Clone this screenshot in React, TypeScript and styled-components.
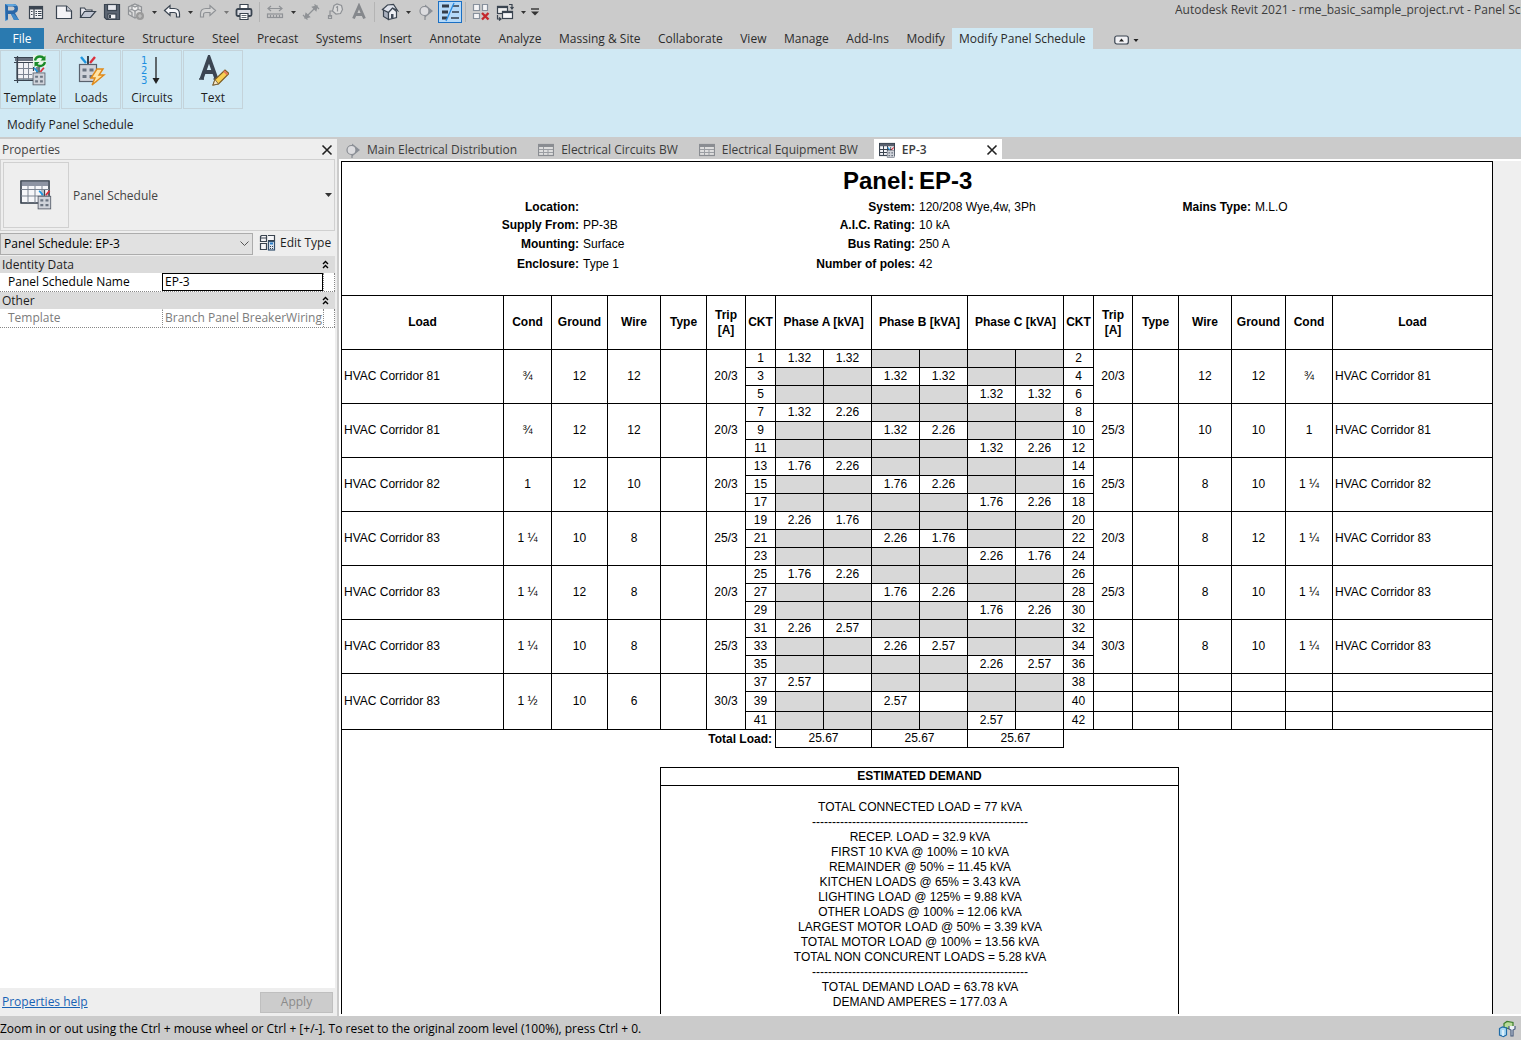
import React from "react";
import styled, { createGlobalStyle } from "styled-components";

const chrome = "#cbcbcb";
const ribbon = "#d0e9f4";
const ink = "#3a4450";
const faded = "#8f9296";

const GlobalStyle = createGlobalStyle`
  *, *::before, *::after { box-sizing: border-box; }
  body { margin: 0; font: 12px/16px "Open Sans", "Noto Sans", sans-serif; color: #1e1e1e; }
  button, input, select { font: inherit; color: inherit; margin: 0; }
`;

const Shell = styled.div`
  display: flex;
  flex-direction: column;
  height: 100vh;
  overflow: hidden;
  background: ${chrome};
`;

/* ---------- title bar ---------- */
const TitleBar = styled.header`
  display: flex;
  height: 28px;
  flex: none;
`;
const QuickAccess = styled.div`
  display: flex;
  align-items: center;
  height: 24px;
`;
const ToolButton = styled.button<{ $active?: boolean; $start?: boolean }>`
  display: flex;
  align-items: center;
  justify-content: center;
  width: 24px;
  height: 22px;
  padding: 0;
  margin-left: ${(p) => (p.$start ? 4 : 0)}px;
  border: 1px solid ${(p) => (p.$active ? "#1a6fc4" : "transparent")};
  background: ${(p) => (p.$active ? "#b5d9f8" : "none")};
`;
const ArrowButton = styled.button`
  display: flex;
  align-items: center;
  justify-content: center;
  width: 12px;
  height: 22px;
  padding: 0;
  border: 0;
  background: none;
`;
const Divider = styled.span`
  width: 1px;
  height: 20px;
  margin: 0 3px;
  background: #b4b4b4;
`;
const WindowTitle = styled.div`
  width: 346px;
  margin-left: auto;
  padding-top: 2px;
  overflow: hidden;
  white-space: nowrap;
  color: #3c3c3c;
`;

/* ---------- ribbon ---------- */
const RibbonTabs = styled.nav`
  display: flex;
  align-items: stretch;
  height: 21px;
  flex: none;
`;
const TabGroup = styled.div`
  display: flex;
  justify-content: space-between;
  width: 903px;
  margin-left: 5px;
`;
const RibbonTab = styled.button<{ $kind?: "file" | "active" }>`
  padding: 1px 7px 0;
  border: 0;
  white-space: nowrap;
  line-height: 20px;
  color: ${(p) => (p.$kind === "file" ? "#fff" : "#2b2b2b")};
  background: ${(p) => (p.$kind === "file" ? "#2a7ab0" : p.$kind === "active" ? ribbon : "none")};
  ${(p) => (p.$kind === "file" ? "width: 44px;" : "")}
`;
const Minimize = styled.button`
  display: flex;
  align-items: center;
  margin-left: 21px;
  padding: 2px 0 0;
  border: 0;
  background: none;
`;
const Ribbon = styled.section`
  display: flex;
  gap: 1px;
  height: 62px;
  padding-top: 1px;
  flex: none;
  background: ${ribbon};
`;
const RibbonButton = styled.button`
  display: flex;
  flex-direction: column;
  align-items: center;
  gap: 3px;
  width: 60px;
  height: 59px;
  padding: 4px 0 0;
  border: 1px solid #c4d3da;
  background: none;
`;
const PanelTitle = styled.div`
  height: 28px;
  padding: 6px 7px 0;
  flex: none;
  border-bottom: 2px solid ${chrome};
  background: ${ribbon};
`;

/* ---------- workspace ---------- */
const Workspace = styled.main`
  display: flex;
  flex: 1;
  min-height: 0;
`;
const Properties = styled.aside`
  display: flex;
  flex-direction: column;
  width: 337px;
  flex: none;
  padding-right: 2px;
  background: #eeeeee;
`;
const PropertiesHead = styled.div`
  display: flex;
  align-items: center;
  justify-content: space-between;
  height: 20px;
  padding: 2px 2px 0;
  color: #444;
`;
const IconButton = styled.button`
  display: flex;
  padding: 0;
  border: 0;
  background: none;
`;
const TypeSelector = styled.button`
  display: flex;
  align-items: center;
  gap: 4px;
  height: 72px;
  padding: 0 2px;
  border: 1px solid #d0d0d0;
  background: none;
  color: #444;
  text-align: left;
`;
const TypeThumb = styled.span`
  display: flex;
  align-items: center;
  justify-content: center;
  width: 66px;
  height: 66px;
  border: 1px solid #d0d0d0;
`;
const TypeName = styled.span`
  flex: 1;
  padding-top: 2px;
`;
const FilterRow = styled.div`
  display: flex;
  align-items: center;
  gap: 6px;
  height: 25px;
`;
const FilterBox = styled.div`
  position: relative;
  width: 253px;
  height: 22px;
  svg { position: absolute; right: 4px; top: 8px; pointer-events: none; }
`;
const Filter = styled.select`
  width: 100%;
  height: 100%;
  padding: 0 3px;
  appearance: none;
  border: 1px solid #acacac;
  border-radius: 0;
  background: #e1e1e1;
  color: #000;
`;
const EditType = styled.button`
  display: flex;
  align-items: center;
  gap: 4px;
  padding: 0 0 2px;
  border: 0;
  background: none;
  white-space: nowrap;
`;
const PropertyList = styled.div`
  flex: 1;
  background: #fff;
`;
const GroupHead = styled.button`
  display: flex;
  align-items: center;
  justify-content: space-between;
  width: 100%;
  height: 17px;
  padding: 0 6px 0 2px;
  border: 0;
  background: #dbdbdb;
`;
const PropertyRow = styled.div<{ $muted?: boolean }>`
  display: grid;
  grid-template-columns: 162px 161px 12px;
  height: 19px;
  border-bottom: 1px dotted #888;
  color: ${(p) => (p.$muted ? "#7c7c7c" : "#000")};
`;
const PropertyName = styled.label`
  padding-left: 8px;
  line-height: 17px;
`;
const PropertyInput = styled.input`
  width: 100%;
  min-width: 0;
  height: 18px;
  padding: 0 0 1px 2px;
  border: 1px solid #000;
  border-radius: 0;
  outline: 0;
  background: #fff;
  &:disabled { border-color: transparent; border-right: 0; border-left: 1px dotted #888; color: #7c7c7c; }
`;
const PropertyEnd = styled.span`
  border: 1px dotted #888;
  border-width: 0 1px;
`;
const PropertiesFoot = styled.div`
  display: flex;
  align-items: center;
  justify-content: space-between;
  height: 28px;
  padding: 0 2px;
`;
const HelpLink = styled.a`
  color: #1762b5;
`;
const ApplyButton = styled.button`
  width: 73px;
  height: 21px;
  padding: 0;
  border: 1px solid #bfbfbf;
  background: #cccccc;
  &:disabled { color: #8a8a8a; }
`;

/* ---------- document view ---------- */
const DocumentView = styled.section`
  display: flex;
  flex-direction: column;
  flex: 1;
  min-width: 0;
  margin-left: 2px;
`;
const ViewTabs = styled.div`
  display: flex;
  height: 20px;
  flex: none;
`;
const ViewTab = styled.div<{ $active?: boolean }>`
  display: flex;
  align-items: center;
  padding: 1px ${(p) => (p.$active ? 4 : 16)}px 0 0;
  background: ${(p) => (p.$active ? "#fff" : "none")};
  ${(p) => (p.$active ? "width: 128px; font-weight: 600;" : "")}
`;
const ViewTabButton = styled.button`
  display: flex;
  flex: 1;
  align-items: center;
  gap: 7px;
  padding: 0 0 0 5px;
  border: 0;
  background: none;
  white-space: nowrap;
  color: #3c3c3c;
`;
const Canvas = styled.div`
  display: flex;
  flex: 1;
  min-height: 0;
  padding: 2px 0 2px 2px;
  background: #fff;
`;
const Margin = styled.div`
  width: 28px;
  background: #efefef;
`;
const Sheet = styled.article`
  display: flex;
  flex-direction: column;
  flex: 1;
  min-width: 0;
  overflow: hidden;
  border: 1px solid #000;
  border-bottom: 0;
  font: 12px/15px "Liberation Sans", Arial, sans-serif;
  color: #000;
`;
const SheetHead = styled.div`
  display: grid;
  grid-template-columns: 237px 1fr 100px 228px 100px 237px;
  grid-template-rows: 36px 18px 18px 20px 20px;
  column-gap: 4px;
  align-items: center;
  height: 133px;
  flex: none;
`;
const SheetTitle = styled.h1`
  grid-column: 3 / 5;
  margin: 0;
  padding-top: 2px;
  display: grid;
  grid-template-columns: 100px 1fr;
  column-gap: 4px;
  font-size: 24px;
  line-height: 28px;
  span:first-child { justify-self: end; }
`;
const Fact = styled.span<{ $col: number; $row: number; $label?: boolean }>`
  grid-column: ${(p) => p.$col};
  grid-row: ${(p) => p.$row};
  white-space: nowrap;
  ${(p) => (p.$label ? "font-weight: bold; justify-self: end;" : "")}
`;
const Schedule = styled.table`
  width: 100%;
  flex: none;
  table-layout: fixed;
  border-collapse: separate;
  border-spacing: 0;
  border-top: 1px solid #000;
`;
const Column = styled.col<{ $w?: number }>`
  width: ${(p) => (p.$w ? `${p.$w}px` : "auto")};
`;
const HeadCell = styled.th`
  height: 54px;
  padding: 0;
  border: 1px solid #000;
  border-width: 0 1px 1px 0;
  &:last-child { border-right: 0; }
`;
const Row = styled.tr<{ $tall?: boolean }>`
  height: ${(p) => (p.$tall ? 20 : 18)}px;
`;
const Cell = styled.td<{ $load?: boolean; $shaded?: boolean; $last?: boolean }>`
  padding: ${(p) => (p.$load ? "0 2px" : "0")};
  border: 1px solid #000;
  border-width: 0 ${(p) => (p.$last ? 0 : 1)}px 1px 0;
  text-align: ${(p) => (p.$load ? "left" : "center")};
  background: ${(p) => (p.$shaded ? "#d8d8d8" : "none")};
`;
const TotalLabel = styled.th`
  padding: 0 3px;
  border-right: 1px solid #000;
  text-align: right;
`;
const Demand = styled.section`
  flex: 1;
  width: 519px;
  margin: 19px auto 0 318px;
  border: 1px solid #000;
  border-bottom: 0;
`;
const DemandTitle = styled.h2`
  margin: 0;
  height: 18px;
  border-bottom: 1px solid #000;
  font-size: 12px;
  line-height: 17px;
  text-align: center;
`;
const DemandText = styled.div`
  padding: 14px 0 0 1px;
  text-align: center;
  white-space: pre-line;
`;
const StatusBar = styled.footer`
  display: flex;
  align-items: center;
  justify-content: space-between;
  height: 24px;
  padding: 2px 5px 0 0;
  flex: none;
  color: #000;
`;

/* ---------- icons ---------- */
type Kids = { children: React.ReactNode; s?: number };
const Svg = ({ children, s = 18 }: Kids) => (
  <svg width={s} height={s} viewBox={`0 0 ${s} ${s}`} fill="none" stroke={ink} strokeWidth="1.2" aria-hidden="true">
    {children}
  </svg>
);
const Caret = ({ c = "#333" }: { c?: string }) => (
  <svg width="5" height="3" viewBox="0 0 5 3" aria-hidden="true"><path d="M0 0h5L2.500 3z" fill={c} /></svg>
);
const Cross = () => (
  <svg width="12" height="12" viewBox="0 0 12 12" aria-hidden="true"><path d="M1.500 1.500l9 9M10.500 1.500l-9 9" stroke="#222" strokeWidth="1.600" /></svg>
);
const RevitLogo = () => (
  <Svg s={20}>
    <g stroke="none">
      <path d="M3 2l3 1v15l-3 1z" fill="#4f97d6" />
      <path d="M3 2h8q5 0 5 4.500 0 3.500-3 4.500l4 7h-5l-3-6H6v5l-2 1z" fill="#2a67a8" />
      <path d="M6 4.500h4.500q2 0 2 2t-2 2H6z" fill={chrome} />
      <path d="M3 2h8q3 0 4.300 2H6z" fill="#5fa5de" />
      <path d="M9 12h3l5 6h-5z" fill="#3f88c8" />
    </g>
  </Svg>
);
const PropsIcon = () => (
  <Svg><rect x="2.500" y="3.500" width="13" height="12" fill="#f4f4f6" /><path d="M2 5h14" strokeWidth="3" /><path d="M7 6v9" /><path d="M4 8.500h1.500M4 11.500h1.500M8.500 8.500h1.500M8.500 10.500h1.500M8.500 12.500h1.500M11 8.500h3.500M11 10.500h3.500M11 12.500h3.500" /></Svg>
);
const NewIcon = () => (
  <Svg><path d="M1.500 3h10l5 5v7.500h-15z" fill="#f3f3f6" /><path d="M11.500 3v5h5" fill="#c9ccd6" /></Svg>
);
const OpenIcon = () => (
  <Svg><path d="M1.500 14V5h4l1.500 2h6v2" fill="#e8e8ee" /><path d="M1.500 14.500l4-6h11l-5 6z" fill="#c3c8d4" /></Svg>
);
const SaveIcon = () => (
  <Svg><path d="M1.500 1.500h15v15h-13l-2-2z" fill="#5d6673" /><rect x="4.500" y="1.500" width="9" height="6" fill="#e6e8ee" /><rect x="5" y="11" width="8" height="5" fill="#f3f3f5" /><path d="M7 12v3" strokeWidth="2" /></Svg>
);
const CubesIcon = () => (
  <Svg><g stroke={faded}><path d="M8 1l6.500 3v7.500L8 15l-6.500-3.500V4z" fill="#dcdcdc" /><path d="M5 2.500v4l3 1.500 3-1.500v-4L8 4z" fill="#efefef" /><path d="M1.500 7.500L5 6.500M14.500 7.500L11 6.500M8 8v6.500M1.500 7.500L5 9.500v4" /></g><circle cx="13" cy="13" r="4" fill="#9a9a9a" stroke="none" /><path d="M11 13h4M13 11v4" stroke="#c4c4c4" /></Svg>
);
const UndoIcon = ({ off }: { off?: boolean }) => (
  <Svg><path transform={off ? "translate(18 0) scale(-1 1)" : undefined} stroke={off ? faded : ink} fill={off ? "#d4d4d4" : "#f4f5f8"} d="M1.500 7.500l5.500-5v3h4q5.500 0 5.500 5.500v3h-3v-2.500q0-2-2.500-2H7v3z" /></Svg>
);
const PrintIcon = () => (
  <Svg><path d="M5 6V1.500h8V6" fill="#fff" /><rect x="1.500" y="6" width="15" height="7" rx="1.500" fill="#d9dbe2" strokeWidth="1.800" /><path d="M5 10.500h8v6H5z" fill="#fff" /><path d="M6.500 12.500h5M6.500 14.500h5" strokeWidth=".8" /></Svg>
);
const MeasureIcon = () => (
  <Svg><g stroke={faded}><path d="M2.500 5.500h13M5 3L2 5.500 5 8M13 3l3 2.500L13 8" /><rect x="1.500" y="11" width="15" height="3.500" /><path d="M4.500 12v2M7.500 12v2M10.500 12v2M13.500 12v2" /></g></Svg>
);
const AlignedIcon = () => (
  <Svg><g stroke={faded}><path d="M3 15L15 3" /><path d="M4 10.500L3 15l4.500-1zM14 7.500L15 3l-4.500 1z" fill={faded} /><path d="M1 12l4.500 4.500M12.500 1.500L17 6" /></g></Svg>
);
const TagIcon = () => (
  <Svg><g stroke={faded}><path d="M8 2.500l3-1.500 4.500 1.500 1 4-2 4-4.500.5L6.500 8z" fill="#dadada" /><path d="M6.500 8H4v6M2.500 12.500h3v3h-3z" /><path d="M10 4.500l1.500-1v5" /></g></Svg>
);
const LetterIcon = () => (
  <Svg><path d="M3.500 15.500L9 3l5.500 12.500M5.500 11.500h7" stroke="#85888c" strokeWidth="2.800" /></Svg>
);
const HouseIcon = () => (
  <Svg><path d="M2.500 6.500l5 2.500v7.500l-5-3z" fill="#a9b0be" /><path d="M7.500 9l4-4 4 3.500v6l-8 2z" fill="#eef0f5" /><path d="M1.500 6.500L6.500 2l6-.5 4 6-5-2.500-4 4.500z" fill="#dfe3ec" /><path d="M10 11h2.500v4.500H10z" fill="#444e5c" stroke="none" /></Svg>
);
const SectionIcon = ({ s = 18 }: { s?: number }) => (
  <Svg s={s}><path d="M8 1.500L16 8l-8 6.500z" fill="#8b9098" stroke="none" /><circle cx="7.500" cy="8" r="4.500" fill="#dcdcdf" stroke="#878b91" /><path d="M8 13v4" stroke="#878b91" /></Svg>
);
const ThinLinesIcon = () => (
  <Svg s={20}><path d="M2 4h7M2 10h6M2 16h5" stroke="#333d49" strokeWidth="3" /><path d="M13 4h6M12 10h7M11 16h8" stroke="#333d49" strokeWidth="1.500" /><path d="M14 1L6 19" stroke="#2a8be0" strokeWidth="1.300" /></Svg>
);
const CloseViewsIcon = () => (
  <Svg><path d="M1.500 1.500h6v6h-6zM10.500 1.500h5v6h-5zM1.500 10.500h6v5h-6z" fill="#f4f4f6" stroke="#87909c" /><path d="M10 10l6.500 6.500M16.500 10L10 16.500" stroke="#c4282d" strokeWidth="2.400" /></Svg>
);
const SwitchIcon = () => (
  <Svg><rect x="1.500" y="3.500" width="10" height="7" fill="#eee" /><path d="M1 4h11" strokeWidth="2.200" /><rect x="6.500" y="8.500" width="10" height="7" fill="#f6f6f8" /><path d="M6 9h11" strokeWidth="2.200" /><path d="M13 1.500h3v4M14.500 4l1.500 2 1.500-2M1.500 12v4h3M3 14.500l2 1.500-2 1.500" /></Svg>
);
const CustomizeIcon = () => (
  <svg width="8" height="8" viewBox="0 0 8 8" aria-hidden="true"><path d="M0 1h8" stroke="#333" strokeWidth="1.400" /><path d="M0 3.500h8L4 7.500z" fill="#333" /></svg>
);
const Breaker = () => (
  <g>
    <path d="M3 1l5 6" stroke="#1d95e0" strokeWidth="2.400" /><path d="M17 1l-5 6" stroke="#dc2f3c" strokeWidth="2.400" /><path d="M10 0v8" strokeWidth="2" />
    <rect x="1.500" y="8.500" width="17" height="17" fill="#d0d3da" stroke="#59616d" />
    <path d="M4.500 12.500h4v3h-4zM11.500 12.500h4v3h-4zM4.500 19h4v3h-4zM11.500 19h4v3h-4z" fill="#6b7481" stroke="none" />
  </g>
);
const GridShape = () => (
  <g><rect x="1" y="2" width="28" height="22" fill="#f6f7fa" /><path d="M1 4.500h28" strokeWidth="5" stroke="#8d94a3" /><path d="M1 2h28v22H1z" /><path d="M1 10.500h28M1 17h28M8 7v17M15 7v17M22 7v17" stroke="#7d8592" strokeWidth="1" /></g>
);
const TemplateIcon = () => (
  <Svg s={32}>
    <path d="M3 3h20v21H3z" fill="#f1f2f6" /><path d="M1 4h22" strokeWidth="4" stroke="#69717f" />
    <path d="M0 2.500h22M0 7.500h20M0 25.500h20M3.500 1v27M19.500 7v9" strokeWidth="1.200" />
    <path d="M4 13.500h15M4 19.500h14M9.500 8v17M14.500 8v17" stroke="#7d8592" strokeWidth="1" />
    <g transform="translate(18 12) scale(.7)"><Breaker /></g>
    <rect x="19" y="0" width="13" height="12" fill="#e8f5ea" stroke="none" />
    <path d="M21 5.500q1-4 5-4 2.500 0 4 2M31 7q-1 4-5 4-2.500 0-4-2" stroke="#1a8a2a" strokeWidth="2.400" />
    <path d="M31.500.5v5h-5zM20.500 12V7h5z" fill="#1a8a2a" stroke="none" />
  </Svg>
);
const ScheduleIcon = () => (
  <Svg s={32}><GridShape /><g transform="translate(17 11) scale(.74)"><Breaker /></g></Svg>
);
const LoadsIcon = () => (
  <Svg s={32}><g transform="translate(3 1)"><Breaker /></g><path d="M22 14h6l-4 6h5L17 30l3-7h-4z" fill="#ffe3a6" stroke="#e08a1a" strokeWidth="1.400" /></Svg>
);
const CircuitsIcon = () => (
  <svg width="32" height="32" viewBox="0 0 32 32" aria-hidden="true">
    <g fill="#1c8fe0" fontFamily="DejaVu Sans, sans-serif" fontSize="10"><text x="5" y="9">1</text><text x="5" y="19">2</text><text x="5" y="29">3</text></g>
    <path d="M20 2v23" stroke="#222" strokeWidth="1.300" /><path d="M16.500 23h7L20 29z" fill="#222" />
  </svg>
);
const TextIcon = () => (
  <Svg s={32}><path d="M4.500 24L12 3l7.500 21M7.500 17h10" stroke="#3b4552" strokeWidth="3.800" /><path d="M2 24h5M16.500 24H22" strokeWidth="1.500" /><path d="M16 30l2-5.500L28 15l4 3.500L21.500 29z" fill="#f8cf52" stroke="#7a5a20" /><path d="M18 24.500l3.500 4.500-5.500 1z" fill="#f7e7c4" stroke="#6b5630" strokeWidth=".8" /><path d="M27 16l3.500 3.500" stroke="#e5785a" strokeWidth="2" /></Svg>
);
const MiniTable = () => (
  <Svg s={16}><rect x=".5" y="2.500" width="15" height="11" fill="#dedede" stroke="#8a8d92" /><path d="M1 4h14" stroke="#8a8d92" strokeWidth="2" /><path d="M5.500 5v8M1 7.500h14M1 10.500h14M10 8v5" stroke="#9a9da2" strokeWidth="1" /></Svg>
);
const MiniSchedule = () => (
  <Svg s={16}><rect x=".5" y="1.500" width="15" height="12" fill="#f4f4f8" /><path d="M1 3h14" strokeWidth="2.500" stroke="#59606e" /><path d="M4.500 4v9M8.500 4v9M1 7.500h12M1 10.500h8" strokeWidth="1" /><g transform="translate(7.500 5) scale(.42)"><Breaker /></g></Svg>
);
const EditTypeIcon = () => (
  <Svg s={17}><path d="M1.500 2.500l1-1h5v6h-6zM9 1.500h6.500v5H9M1.500 9.500h6v6h-6zM1.500 4h6" fill="#f5f5f8" /><rect x="9.500" y="7.500" width="6" height="8.500" fill="#dfe9f5" stroke="#33506e" /><path d="M11 9.500h3" stroke="#2b7fc9" strokeWidth="2" /><path d="M11 12.500h1M13 12.500h1M11 14.500h1M13 14.500h1" /></Svg>
);
const Chevrons = () => (
  <svg width="7" height="9" viewBox="0 0 7 9" fill="none" stroke="#000" strokeWidth="1.400" aria-hidden="true"><path d="M1 4l2.500-2.500L6 4M1 8l2.500-2.500L6 8" /></svg>
);
const StatusIcon = () => (
  <Svg s={18}><path d="M6 3.500l3-2 6 1v4l-4 2-5-1z" fill="#b9dc9a" stroke="#3c7d2b" /><path d="M1.500 8.500l3-1.500 4 1v7l-3 1.500-4-1.500z" fill="#a9d8f2" stroke="#1f6ca8" /><path d="M5 10v6" stroke="#fff" /><path d="M11 6v3l2 1v6h2v-6l2-1V6" fill="#eef2f8" stroke="#44597c" /></Svg>
);

/* ---------- data ---------- */
const ribbonTabs = ["Architecture", "Structure", "Steel", "Precast", "Systems", "Insert", "Annotate", "Analyze", "Massing & Site", "Collaborate", "View", "Manage", "Add-Ins", "Modify"];
const widths = [162, 48, 56, 53, 46, 39, 30, 48, 48, 48, 48, 48, 48, 30, 39, 46, 53, 54, 47];

type Side = { load: string; cond: string; ground: string; wire: string; trip: string; kva: string };
const side = (n: string, cond: string, ground: string, wire: string, trip: string, kva: string): Side => ({ load: `HVAC Corridor ${n}`, cond, ground, wire, trip, kva });
const circuits: { left: Side; right?: Side }[] = [
  { left: side("81", "¾", "12", "12", "20/3", "1.32"), right: side("81", "¾", "12", "12", "20/3", "1.32") },
  { left: side("81", "¾", "12", "12", "20/3", "1.32"), right: side("81", "1", "10", "10", "25/3", "2.26") },
  { left: side("82", "1", "12", "10", "20/3", "1.76"), right: side("82", "1 ¼", "10", "8", "25/3", "2.26") },
  { left: side("83", "1 ¼", "10", "8", "25/3", "2.26"), right: side("83", "1 ¼", "12", "8", "20/3", "1.76") },
  { left: side("83", "1 ¼", "12", "8", "20/3", "1.76"), right: side("83", "1 ¼", "10", "8", "25/3", "2.26") },
  { left: side("83", "1 ¼", "10", "8", "25/3", "2.26"), right: side("83", "1 ¼", "10", "8", "30/3", "2.57") },
  { left: side("83", "1 ½", "10", "6", "30/3", "2.57") },
];
const facts: [string, string][][] = [
  [["Location:", ""], ["Supply From:", "PP-3B"], ["Mounting:", "Surface"], ["Enclosure:", "Type 1"]],
  [["System:", "120/208 Wye,4w, 3Ph"], ["A.I.C. Rating:", "10 kA"], ["Bus Rating:", "250 A"], ["Number of poles:", "42"]],
  [["Mains Type:", "M.L.O"]],
];
const rule = "-".repeat(54);
const demandLines = [
  "TOTAL CONNECTED LOAD = 77 kVA", rule, "RECEP. LOAD = 32.9 kVA", "FIRST 10 KVA @ 100% = 10 kVA", "REMAINDER @ 50% = 11.45 kVA",
  "KITCHEN LOADS @ 65% = 3.43 kVA", "LIGHTING LOAD @ 125% = 9.88 kVA", "OTHER LOADS @ 100% = 12.06 kVA", "LARGEST MOTOR LOAD @ 50% = 3.39 kVA",
  "TOTAL MOTOR LOAD @ 100% = 13.56 kVA", "TOTAL NON CONCURENT LOADS = 5.28 kVA", rule, "TOTAL DEMAND LOAD = 63.78 kVA", "DEMAND AMPERES = 177.03 A",
];

const Tool = ({ label, children, active, start }: { label: string; children: React.ReactNode; active?: boolean; start?: boolean }) => (
  <ToolButton type="button" aria-label={label} $active={active} $start={start}>{children}</ToolButton>
);
const Arrow = ({ label, off }: { label: string; off?: boolean }) => (
  <ArrowButton type="button" aria-label={label}><Caret c={off ? "#777" : "#333"} /></ArrowButton>
);

const CircuitRows = ({ index }: { index: number }) => {
  const { left, right } = circuits[index];
  return (
    <>
      {[0, 1, 2].map((pole) => {
        const odd = index * 6 + pole * 2 + 1;
        return (
          <Row key={pole} $tall={!right && pole === 1}>
            {pole === 0 && (
              <>
                <Cell rowSpan={3} $load>{left.load}</Cell>
                <Cell rowSpan={3}>{left.cond}</Cell>
                <Cell rowSpan={3}>{left.ground}</Cell>
                <Cell rowSpan={3}>{left.wire}</Cell>
                <Cell rowSpan={3} />
                <Cell rowSpan={3}>{left.trip}</Cell>
              </>
            )}
            <Cell>{odd}</Cell>
            {[0, 1, 2].map((phase) => (
              <React.Fragment key={phase}>
                <Cell $shaded={phase !== pole}>{phase === pole ? left.kva : null}</Cell>
                <Cell $shaded={phase !== pole}>{phase === pole && right ? right.kva : null}</Cell>
              </React.Fragment>
            ))}
            <Cell>{odd + 1}</Cell>
            {right && pole === 0 && (
              <>
                <Cell rowSpan={3}>{right.trip}</Cell>
                <Cell rowSpan={3} />
                <Cell rowSpan={3}>{right.wire}</Cell>
                <Cell rowSpan={3}>{right.ground}</Cell>
                <Cell rowSpan={3}>{right.cond}</Cell>
                <Cell rowSpan={3} $load $last>{right.load}</Cell>
              </>
            )}
            {!right && [0, 1, 2, 3, 4, 5].map((n) => <Cell key={n} $last={n === 5} />)}
          </Row>
        );
      })}
    </>
  );
};

export default function App() {
  return (
    <Shell>
      <GlobalStyle />
      <TitleBar>
        <QuickAccess>
          <Tool label="Revit"><RevitLogo /></Tool>
          <Tool label="Properties"><PropsIcon /></Tool>
          <Tool label="New" start><NewIcon /></Tool>
          <Tool label="Open"><OpenIcon /></Tool>
          <Tool label="Save"><SaveIcon /></Tool>
          <Tool label="Synchronize"><CubesIcon /></Tool>
          <Arrow label="Synchronize options" />
          <Tool label="Undo"><UndoIcon /></Tool>
          <Arrow label="Undo list" />
          <Tool label="Redo"><UndoIcon off /></Tool>
          <Arrow label="Redo list" off />
          <Tool label="Print"><PrintIcon /></Tool>
          <Divider />
          <Tool label="Measure"><MeasureIcon /></Tool>
          <Arrow label="Measure options" />
          <Tool label="Aligned dimension"><AlignedIcon /></Tool>
          <Tool label="Tag by category"><TagIcon /></Tool>
          <Tool label="Text note"><LetterIcon /></Tool>
          <Divider />
          <Tool label="Default 3D view"><HouseIcon /></Tool>
          <Arrow label="3D view options" />
          <Tool label="Section"><SectionIcon /></Tool>
          <Tool label="Thin lines" active><ThinLinesIcon /></Tool>
          <Divider />
          <Tool label="Close inactive views"><CloseViewsIcon /></Tool>
          <Tool label="Switch windows"><SwitchIcon /></Tool>
          <Arrow label="Window list" />
          <ArrowButton type="button" aria-label="Customize toolbar"><CustomizeIcon /></ArrowButton>
        </QuickAccess>
        <WindowTitle>Autodesk Revit 2021 - rme_basic_sample_project.rvt - Panel Schedule</WindowTitle>
      </TitleBar>

      <RibbonTabs>
        <RibbonTab type="button" $kind="file">File</RibbonTab>
        <TabGroup>
          {ribbonTabs.map((t) => <RibbonTab type="button" key={t}>{t}</RibbonTab>)}
        </TabGroup>
        <RibbonTab type="button" $kind="active">Modify Panel Schedule</RibbonTab>
        <Minimize type="button" aria-label="Minimize ribbon">
          <svg width="25" height="10" viewBox="0 0 25 10" aria-hidden="true">
            <rect x=".8" y="1" width="13.500" height="8" rx="2" fill="#f1f1f4" stroke={ink} strokeWidth="1.200" />
            <path d="M5 6.500h5L7.500 3.500zM19.500 4h5L22 7z" fill="#222" />
          </svg>
        </Minimize>
      </RibbonTabs>
      <Ribbon>
        <RibbonButton type="button"><TemplateIcon />Template</RibbonButton>
        <RibbonButton type="button"><LoadsIcon />Loads</RibbonButton>
        <RibbonButton type="button"><CircuitsIcon />Circuits</RibbonButton>
        <RibbonButton type="button"><TextIcon />Text</RibbonButton>
      </Ribbon>
      <PanelTitle>Modify Panel Schedule</PanelTitle>

      <Workspace>
        <Properties>
          <PropertiesHead>
            Properties
            <IconButton type="button" aria-label="Close properties"><Cross /></IconButton>
          </PropertiesHead>
          <TypeSelector type="button">
            <TypeThumb><ScheduleIcon /></TypeThumb>
            <TypeName>Panel Schedule</TypeName>
            <svg width="7" height="4" viewBox="0 0 7 4" aria-hidden="true"><path d="M0 0h7L3.500 4z" fill="#333" /></svg>
          </TypeSelector>
          <FilterRow>
            <FilterBox>
              <Filter aria-label="Properties filter" defaultValue="ep3"><option value="ep3">Panel Schedule: EP-3</option></Filter>
              <svg width="9" height="6" viewBox="0 0 9 6" fill="none" stroke="#555" aria-hidden="true"><path d="M.5 .5l4 4 4-4" /></svg>
            </FilterBox>
            <EditType type="button"><EditTypeIcon />Edit Type</EditType>
          </FilterRow>
          <PropertyList>
            <GroupHead type="button">Identity Data<Chevrons /></GroupHead>
            <PropertyRow>
              <PropertyName htmlFor="schedule-name">Panel Schedule Name</PropertyName>
              <PropertyInput id="schedule-name" defaultValue="EP-3" />
              <PropertyEnd />
            </PropertyRow>
            <GroupHead type="button">Other<Chevrons /></GroupHead>
            <PropertyRow $muted>
              <PropertyName htmlFor="template-name">Template</PropertyName>
              <PropertyInput id="template-name" defaultValue="Branch Panel BreakerWiring" disabled />
              <PropertyEnd />
            </PropertyRow>
          </PropertyList>
          <PropertiesFoot>
            <HelpLink href="#help">Properties help</HelpLink>
            <ApplyButton type="button" disabled>Apply</ApplyButton>
          </PropertiesFoot>
        </Properties>

        <DocumentView>
          <ViewTabs>
            <ViewTab><ViewTabButton type="button"><SectionIcon s={16} />Main Electrical Distribution</ViewTabButton></ViewTab>
            <ViewTab><ViewTabButton type="button"><MiniTable />Electrical Circuits BW</ViewTabButton></ViewTab>
            <ViewTab><ViewTabButton type="button"><MiniTable />Electrical Equipment BW</ViewTabButton></ViewTab>
            <ViewTab $active>
              <ViewTabButton type="button"><MiniSchedule />EP-3</ViewTabButton>
              <IconButton type="button" aria-label="Close view"><Cross /></IconButton>
            </ViewTab>
          </ViewTabs>
          <Canvas>
            <Sheet>
              <SheetHead>
                <SheetTitle><span>Panel:</span><span>EP-3</span></SheetTitle>
                {facts.map((group, g) => group.map(([label, value], r) => (
                  <React.Fragment key={label}>
                    <Fact $label $col={g * 2 + 1} $row={r + 2}>{label}</Fact>
                    <Fact $col={g * 2 + 2} $row={r + 2}>{value}</Fact>
                  </React.Fragment>
                )))}
              </SheetHead>
              <Schedule>
                <colgroup>
                  {widths.map((w, i) => <Column key={i} $w={w} />)}
                  <Column />
                </colgroup>
                <thead>
                  <tr>
                    {["Load", "Cond", "Ground", "Wire", "Type", "Trip [A]", "CKT"].map((h) => <HeadCell key={h}>{h}</HeadCell>)}
                    {["A", "B", "C"].map((p) => <HeadCell key={p} colSpan={2}>Phase {p} [kVA]</HeadCell>)}
                    {["CKT", "Trip [A]", "Type", "Wire", "Ground", "Cond", "Load"].map((h) => <HeadCell key={h}>{h}</HeadCell>)}
                  </tr>
                </thead>
                <tbody>
                  {circuits.map((_, i) => <CircuitRows key={i} index={i} />)}
                </tbody>
                <tfoot>
                  <Row>
                    <TotalLabel colSpan={7}>Total Load:</TotalLabel>
                    {[0, 1, 2].map((n) => <Cell key={n} colSpan={2}>25.67</Cell>)}
                  </Row>
                </tfoot>
              </Schedule>
              <Demand>
                <DemandTitle>ESTIMATED DEMAND</DemandTitle>
                <DemandText>{demandLines.join("\n")}</DemandText>
              </Demand>
            </Sheet>
            <Margin />
          </Canvas>
        </DocumentView>
      </Workspace>
      <StatusBar>
        Zoom in or out using the Ctrl + mouse wheel or Ctrl + [+/-]. To reset to the original zoom level (100%), press Ctrl + 0.
        <StatusIcon />
      </StatusBar>
    </Shell>
  );
}
